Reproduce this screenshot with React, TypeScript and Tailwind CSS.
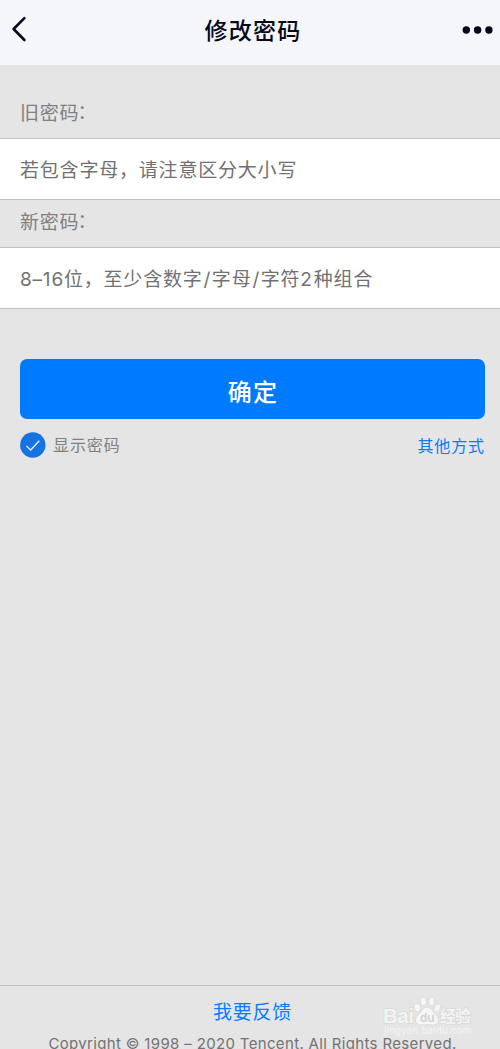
import React from 'react';
import { clsx } from 'clsx';

interface FieldProps {
  label: string;
  className?: string;
  children: React.ReactNode;
}

const Field: React.FC<FieldProps> = ({ label, className, children }) => {
  return (
    <div>
      <div className={clsx('flex items-center pl-5 text-[19px] tracking-[0.8px] text-[#808080]', className)}>
        <span>{label}</span>
        <span className="-mt-0.5 -ml-0.5">：</span>
      </div>
      <div className="flex h-[62px] items-center border-y border-[#bfbfc4] bg-white pt-1 pl-5 text-[19px] tracking-[0.8px] whitespace-nowrap text-[#717171]">
        {children}
      </div>
    </div>
  );
};

const Header: React.FC = () => {
  return (
    <header className="flex h-[65px] items-center justify-between bg-[#f5f6fa] text-[#03081a]">
      <svg className="-mt-[7px] ml-[10px] h-7 w-[42px]" viewBox="0 0 42 28" fill="none">
        <path
          d="M14.4 3.2 3.6 14l10.8 11"
          stroke="currentColor"
          strokeWidth="2.6"
          strokeLinecap="round"
          strokeLinejoin="round"
        />
      </svg>
      <h1 className="-mt-0.5 pl-2 text-[23px] leading-none font-medium tracking-[1.2px]">修改密码</h1>
      <svg className="-mt-1.5 mr-[7px] h-2 w-[47px]" viewBox="0 0 47 8" fill="currentColor">
        <circle cx="20.3" cy="4" r="3.7" />
        <circle cx="31.6" cy="4" r="3.7" />
        <circle cx="42.9" cy="4" r="3.7" />
      </svg>
    </header>
  );
};

const Watermark: React.FC = () => {
  return (
    <div className="absolute top-[10px] left-[383px] h-[50px] w-[92px]">
      <svg className="h-[50px] w-[92px]" viewBox="0 0 92 50">
        <g fill="#f6f6f6" stroke="#d6d6d6" strokeWidth="0.7">
          <ellipse cx="34.3" cy="11.6" rx="3.2" ry="4.3" transform="rotate(-15 34.3 11.6)" />
          <ellipse cx="40.4" cy="5.2" rx="3" ry="4.4" />
          <ellipse cx="48.6" cy="5.4" rx="3" ry="4.4" transform="rotate(10 48.6 5.4)" />
          <ellipse cx="54.2" cy="12" rx="3.1" ry="4.2" transform="rotate(18 54.2 12)" />
          <path d="M44 11.3c3.2 0 4.7 2.4 6.5 4.9 1.8 2.5 5 4 5 7.6s-2.7 5.2-5.8 5.2c-2 0-3.4-.4-5.7-.4s-3.5.4-5.6.4c-3.3 0-5.9-1.6-5.9-5.2s3.3-5.1 5.1-7.6c1.8-2.5 3.2-4.9 6.4-4.9Z" />
        </g>
        <g
          className="font-['Liberation_Sans','Noto_Sans_CJK_SC',sans-serif] font-bold"
          fill="#f4f4f4"
          stroke="#d3d3d3"
          strokeWidth="1"
          paintOrder="stroke"
        >
          <text x="0" y="27.3" fontSize="20.5" textLength="31">Bai</text>
          <text x="57" y="26.3" fontSize="16" textLength="31">经验</text>
        </g>
        <text
          className="font-['Liberation_Sans',sans-serif] font-bold"
          x="37"
          y="26"
          fontSize="12"
          textLength="14.5"
          fill="#d2d2d2"
        >
          du
        </text>
        <text
          className="font-['Liberation_Sans',sans-serif]"
          x="1"
          y="37.5"
          fontSize="10"
          textLength="87"
          fill="#f3f3f3"
        >
          jingyan.baidu.com
        </text>
      </svg>
    </div>
  );
};

export default function App() {
  return (
    <div className="flex h-[1049px] w-[500px] flex-col overflow-hidden bg-[#e5e5e5] font-['Inter','Noto_Sans_CJK_SC',sans-serif]">
      <Header />

      <main className="flex-1">
        <Field label="旧密码" className="h-[73px] pt-[26px]">
          若包含字母，请注意区分大小写
        </Field>
        <Field label="新密码" className="h-[47px]">
          8–16位，至少含数字
          <span className="pl-[1px] tracking-[1.4px]">/</span>字母
          <span className="pl-[1px] tracking-[1.4px]">/</span>字符
          <span className="tracking-[1.9px]">2</span>种组合
        </Field>

        <div className="mt-[50px] pr-[15px] pl-5">
          <button className="flex h-[60px] w-full items-center justify-center rounded-[7px] bg-[#007aff] pt-[7px] pl-[1px] text-2xl font-medium tracking-[1.2px] text-white">
            确定
          </button>

          <div className="mt-[13px] flex h-[26px] items-center justify-between text-base">
            <label className="flex items-center text-[#808080]">
              <svg className="mr-[7px] size-[26px]" viewBox="0 0 26 26" fill="none">
                <circle cx="12.8" cy="13" r="12.7" fill="#1673e2" />
                <path d="m6.4 13.9 4.3 4.1 8.6-9.2" stroke="#e8f1fc" strokeWidth="1.3" />
              </svg>
              <span className="tracking-[0.9px]">显示密码</span>
            </label>
            <a className="pt-[2px] tracking-[0.9px] text-[#087cf2]">其他方式</a>
          </div>
        </div>
      </main>

      <footer className="relative h-16 border-t border-[#c0c0c0] text-center">
        <a className="mt-[13px] block pl-[5px] text-[19px] leading-[28px] tracking-[0.8px] text-[#087cff]">我要反馈</a>
        <Watermark />
        <p className="relative mt-[7px] pl-[5px] text-[15px] leading-5 tracking-[0.34px] whitespace-nowrap text-[#737373]">
          Copyright © 1998 – 2020 Tencent. All Rights Reserved.
        </p>
      </footer>
    </div>
  );
}
